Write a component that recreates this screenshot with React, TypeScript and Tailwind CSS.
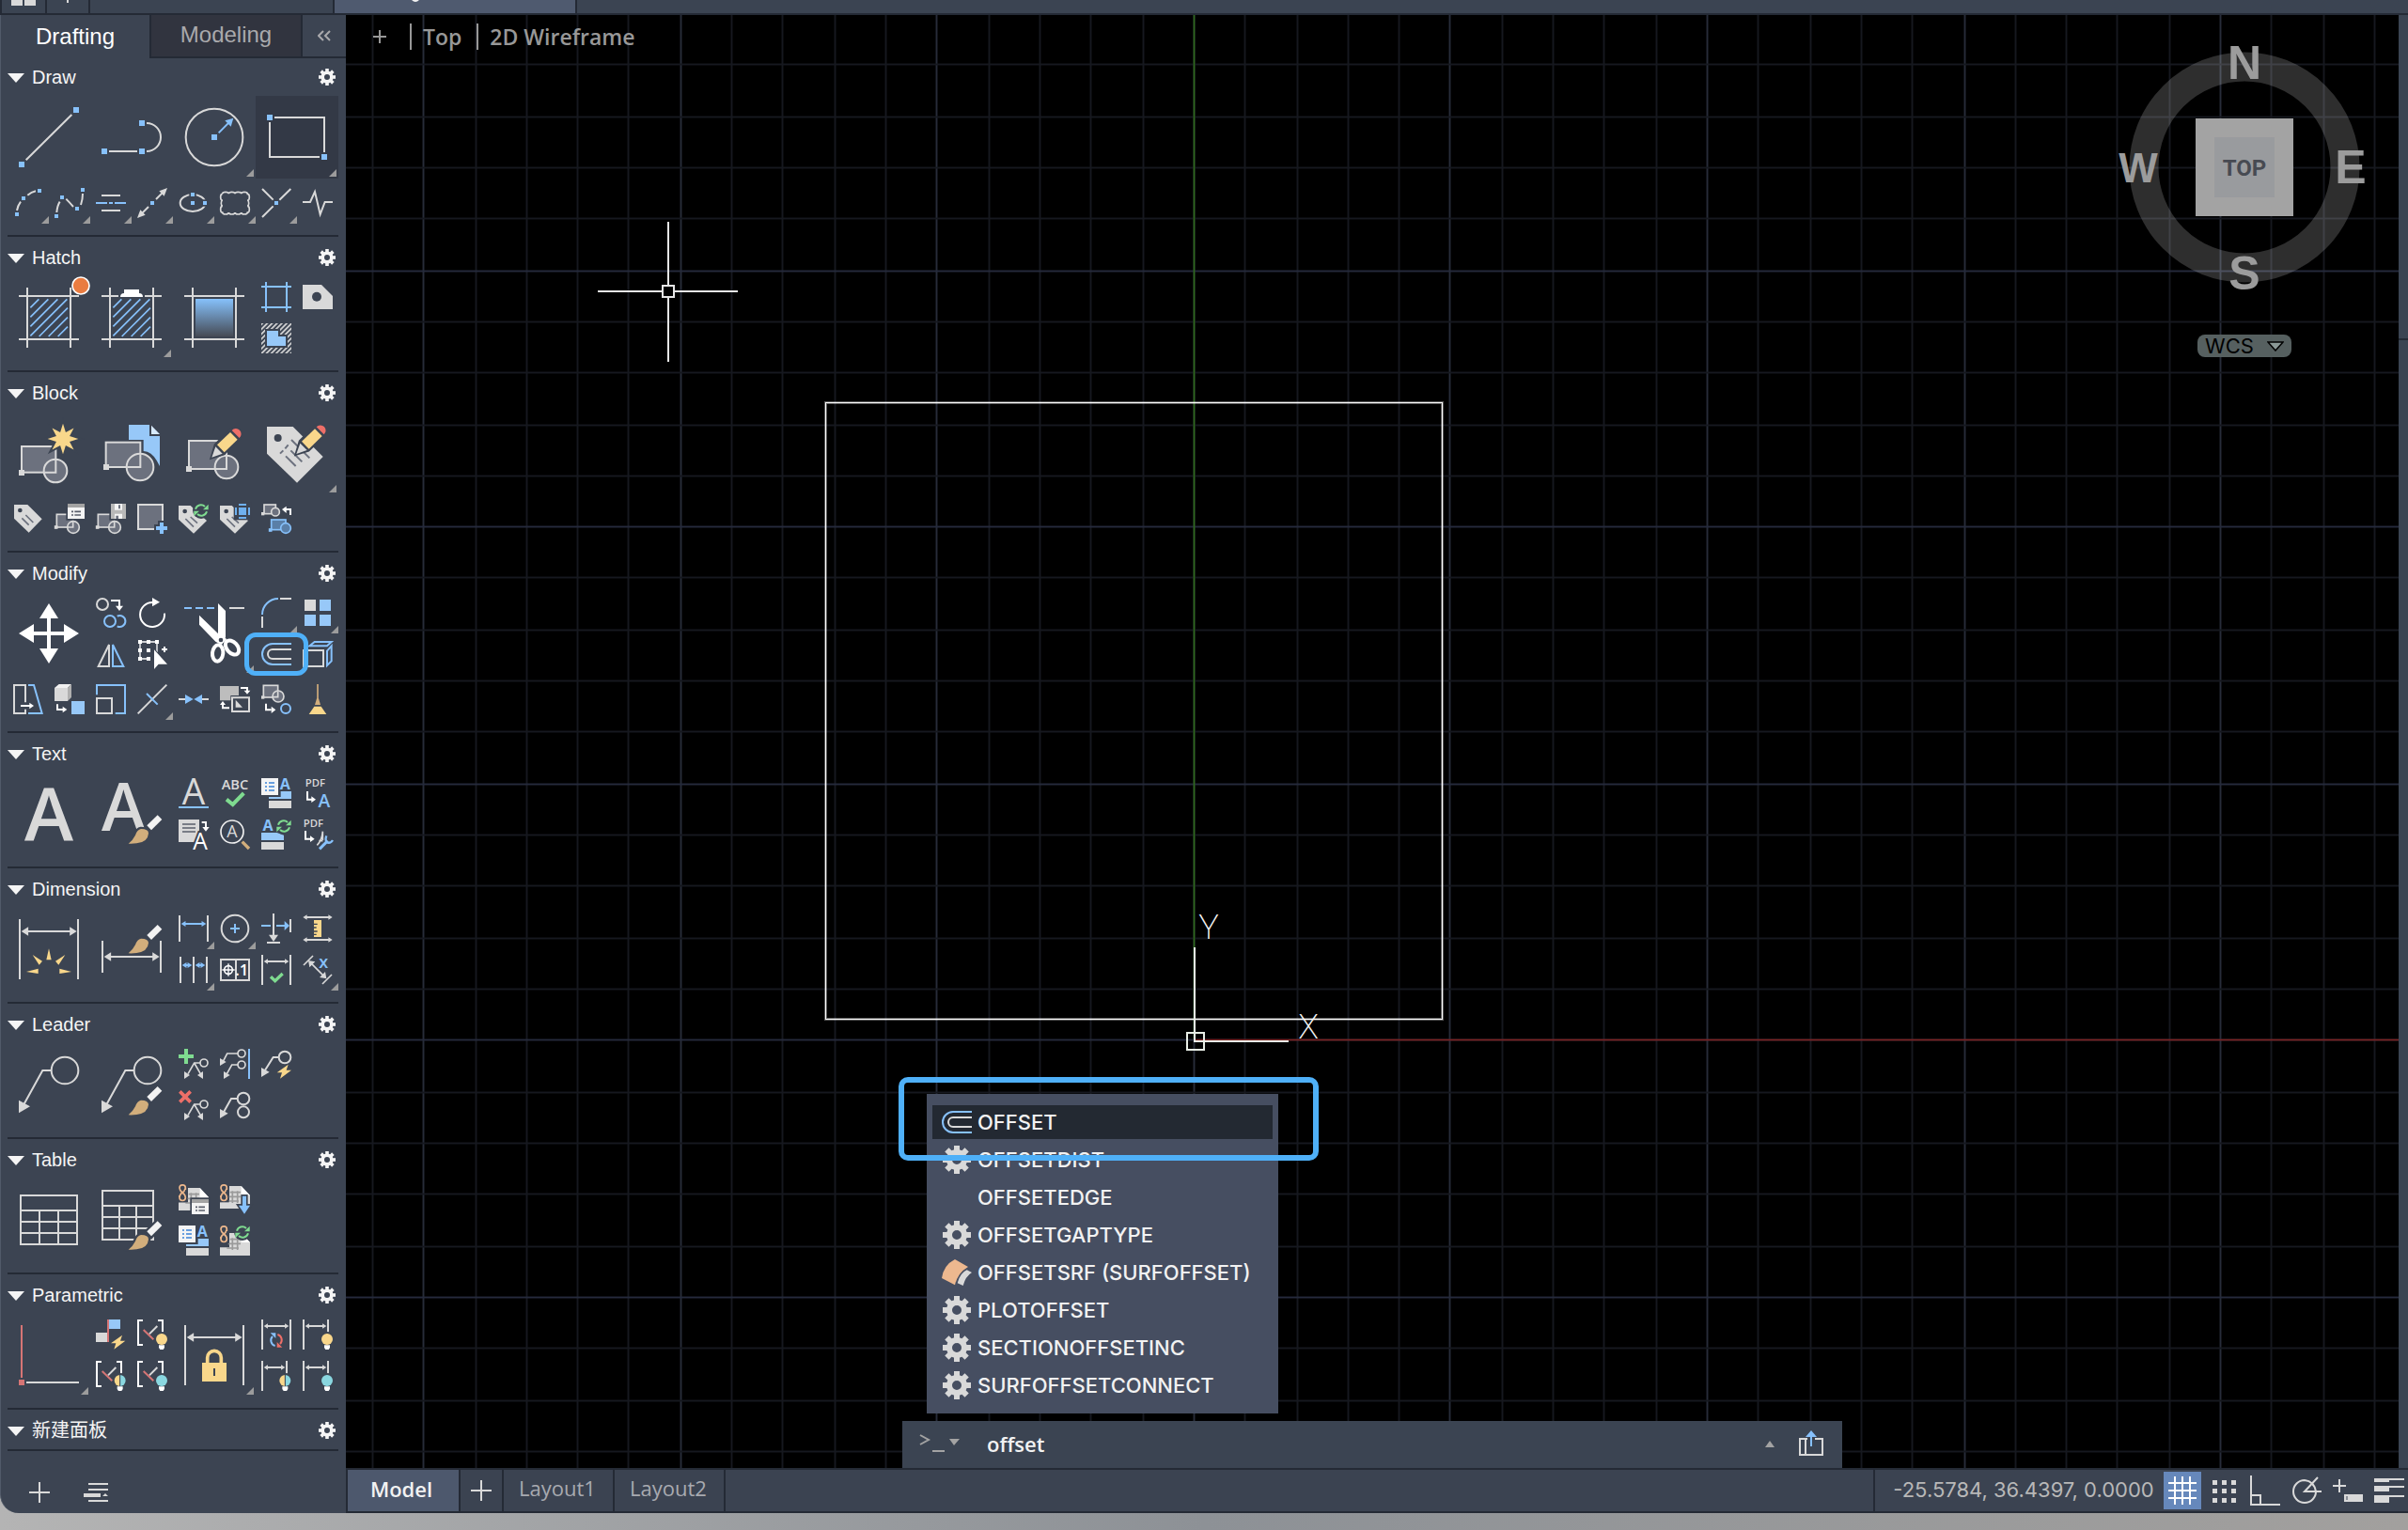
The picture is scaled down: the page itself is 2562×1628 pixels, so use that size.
import React from "react";
import { clsx } from "clsx";

const LIGHT = "#d9d9d9";
const WHITE = "#ffffff";
const BLUE = "#87c1fb";
const SKY = "#97c8f8";
const GRAY = "#6c717e";
const PANEL = "#3c4452";
const YELLOW = "#f9d78b";
const RED = "#ee6f68";
const BRICK = "#d67575";
const GREEN = "#7fdb90";
const TAN = "#d2ae7c";
const PEACH = "#ecb78c";
const CYAN = "#8ad7e0";

/* ---------- drawing primitives ---------- */

const Line = ({ d, c = LIGHT, w = 6 }: { d: string; c?: string; w?: number }) => (
  <path d={d} fill="none" stroke={c} strokeWidth={w} />
);

const Fill = ({ d, c = LIGHT }: { d: string; c?: string }) => <path d={d} fill={c} />;

const Dot = ({ x, y, s = 18, c = BLUE }: { x: number; y: number; s?: number; c?: string }) => (
  <rect x={x - s / 2} y={y - s / 2} width={s} height={s} fill={c} />
);

const Ring = ({ x, y, r, c = LIGHT, f = "none", w = 6 }: { x: number; y: number; r: number; c?: string; f?: string; w?: number }) => (
  <circle cx={x} cy={y} r={r} fill={f} stroke={c} strokeWidth={w} />
);

interface LetterProps {
  x: number;
  y: number;
  size: number;
  c?: string;
  weight?: number;
  halo?: boolean;
  children: string;
}

function Letter({ x, y, size, c = LIGHT, weight = 600, halo, children }: LetterProps) {
  return (
    <text
      x={x}
      y={y}
      fontSize={size}
      fontWeight={weight}
      fill={c}
      stroke={halo ? PANEL : "none"}
      strokeWidth={halo ? 12 : 0}
      paintOrder="stroke"
      textAnchor="middle"
      fontFamily="'Open Sans', 'Noto Sans', sans-serif"
    >
      {children}
    </text>
  );
}

// Horizontal dimension arrow, heads on both ends
function Arrows({ a, b, y, c = LIGHT, h = 8 }: { a: number; b: number; y: number; c?: string; h?: number }) {
  return (
    <>
      <Line d={`M${a + h} ${y}H${b - h}`} c={c} />
      <Fill d={`M${a} ${y}l${h * 1.6} ${-h}v${h * 2}zM${b} ${y}l${-h * 1.6} ${-h}v${h * 2}z`} c={c} />
    </>
  );
}

function Gear({ className }: { className?: string }) {
  return (
    <svg viewBox="0 0 30 30" className={className} fill="currentColor">
      {[0, 45, 90, 135, 180, 225, 270, 315].map((a) => (
        <rect key={a} x="12" y="0" width="6" height="6" transform={`rotate(${a} 15 15)`} />
      ))}
      <circle cx="15" cy="15" r="8" fill="none" stroke="currentColor" strokeWidth="6" />
    </svg>
  );
}

const Brush = ({ dy = 0 }: { dy?: number }) => (
  <g transform={`translate(0 ${dy})`}>
    <path
      d="M179 100L193 114L159 148L145 133ZM126 144Q150 144 150 158Q148 186 112 190Q98 192 86 190Q100 180 108 164Q114 146 126 144Z"
      fill={PANEL}
      stroke={PANEL}
      strokeWidth="14"
    />
    <Fill d="M179 100L193 114L159 148L145 133Z" c="#f3f3f3" />
    <Fill d="M126 144Q150 144 150 158Q148 186 112 190Q98 192 86 191Q100 180 108 164Q114 146 126 144Z" c={TAN} />
  </g>
);

const Pencil = ({ dx = 0, dy = 0 }: { dx?: number; dy?: number }) => (
  <g transform={`translate(${dx} ${dy})`}>
    <path d="M88 110L100 70L148 22A17 17 0 0 1 176 50L126 98Z" fill={PANEL} stroke={PANEL} strokeWidth="10" />
    <Fill d="M88 110L100 76L122 98Z" />
    <Fill d="M105 70L147 30L170 53L128 94Z" c={YELLOW} />
    <path d="M152 24A17 17 0 1 1 176 48Z" fill={RED} />
  </g>
);

const Sync = ({ x, y, r = 18, a = GREEN, b = GREEN }: { x: number; y: number; r?: number; a?: string; b?: string }) => (
  <g transform={`translate(${x} ${y})`}>
    <circle r={r + 9} fill={PANEL} />
    <Line d={`M${-r} -4A${r} ${r} 0 0 1 ${r - 6} ${-r + 6}`} c={a} />
    <Line d={`M${r} 4A${r} ${r} 0 0 1 ${-r + 6} ${r - 6}`} c={b} />
    <Fill d={`M${r + 5} ${-r - 1}V-2H${r - 12}Z`} c={a} />
    <Fill d={`M${-r - 5} ${r + 1}V2H${-r + 12}Z`} c={b} />
  </g>
);

const Bolt = ({ dx = 0 }: { dx?: number }) => (
  <g transform={`translate(${dx} 0)`}>
    <path d="M86 50L50 76H66L60 95L96 68H80Z" fill={YELLOW} />
  </g>
);

const Bulb = ({ x, y, left, right }: { x: number; y: number; left: string; right: string }) => (
  <g>
    <circle cx={x} cy={y} r="23" fill={PANEL} />
    <path d={`M${x} ${y - 18}A18 18 0 0 0 ${x} ${y + 18}Z`} fill={left} />
    <path d={`M${x} ${y - 18}A18 18 0 0 1 ${x} ${y + 18}Z`} fill={right} />
    {left === right ? (
      <path d={`M${x} ${y - 17}v34`} stroke={left} strokeWidth="2" />
    ) : (
      <path d={`M${x} ${y - 18}v36`} stroke={PANEL} strokeWidth="3" />
    )}
    <path d={`M${x - 9} ${y + 19}h18v8l-4 6h-10l-4 -6z`} fill={WHITE} />
  </g>
);

const ListCard = () => (
  <>
    <rect width="54" height="54" fill="#f4f4f4" />
    <path d="M12 15h6M24 15h18M12 27h6M24 27h18M12 39h6M24 39h18" stroke="#3b82d6" strokeWidth="5" />
  </>
);

const WindowCard = ({ x, y }: { x: number; y: number }) => (
  <g transform={`translate(${x} ${y})`}>
    <rect x="-5" y="-5" width="64" height="58" fill={PANEL} />
    <rect width="54" height="48" fill="#f4f4f4" />
    <rect width="54" height="12" fill="#a3a3a3" />
    <path d="M12 25h6M22 25h20M12 36h6M22 36h20" stroke="#5a5f6b" strokeWidth="5" />
  </g>
);

const SmallTag = () => (
  <>
    <Fill d="M0 6H38L90 54L48 95L0 50Z" />
    <circle cx="20" cy="24" r="7" fill={PANEL} />
    <Line d="M22 48L48 74M38 42L60 62" c={GRAY} w={5} />
  </>
);

const SmallBlock = () => (
  <>
    <rect x="7" y="34" width="52" height="41" fill={GRAY} stroke={LIGHT} strokeWidth="5" />
    <Dot x={5} y={75} s={11} c={LIGHT} />
    <Ring x={60} y={75} r={19} f={GRAY} w={5} />
    <Line d="M59 58V75H42" w={5} />
  </>
);

const Link = () => (
  <>
    <rect x="-3" y="-2" width="32" height="60" fill={PANEL} />
    <path d="M22 18V12A9 9 0 0 0 3 12Q3 20 12 27Q22 34 22 43A9 9 0 0 1 3 43V36" fill="none" stroke={PEACH} strokeWidth="5" />
    <path d="M12 27Q20 22 21 14M12 27Q4 32 3 42" fill="none" stroke={PEACH} strokeWidth="5" />
  </>
);

const Sheet = () => (
  <>
    <path d="M30 12H68L96 42V84H0V58H30Z" fill={LIGHT} />
    <path d="M68 12L96 42H68Z" fill={WHITE} />
    <path d="M32 32H66M26 46H66M22 60H60M40 28V66M56 28V66" fill="none" stroke="#9a9a9a" strokeWidth="5" />
  </>
);

const MiniLeader = () => (
  <>
    <Ring x={81} y={45} r={12} w={5} />
    <Line d="M69 45H50L30 80M50 45L70 80" w={5} />
    <Fill d="M18 96V72L36 84ZM78 96V72L60 84Z" />
  </>
);

const Bracket = () => (
  <>
    <Line d="M18 3H3V81H18M66 3H81V40" c={WHITE} />
    <Line d="M20 33L52 64" c={BRICK} />
    <Line d="M39 46L64 21" />
  </>
);

const DimShort = () => (
  <>
    <Line d="M3 0V96M81 0V40" />
    <Arrows a={8} b={76} y={21} />
  </>
);

const HatchFrame = ({ gap }: { gap?: boolean }) => (
  <Line d={`M27 0V192M165 0V192M0 165H192${gap ? "M0 27H54M138 27H192" : "M0 27H192"}`} />
);

const HatchLines = () => (
  <>
    {[101, 131, 161, 191, 221, 251, 281].map((c) => {
      const x1 = Math.max(37, c - 156);
      const x2 = Math.min(156, c - 37);
      return <path key={c} d={`M${x1} ${c - x1}L${x2} ${c - x2}`} stroke={BLUE} strokeWidth="5" />;
    })}
  </>
);

const starPath = (cx: number, cy: number, outer: number, inner: number) =>
  Array.from({ length: 16 }, (_, i) => {
    const r = i % 2 ? inner : outer;
    const a = (i * Math.PI) / 8 - Math.PI / 2;
    return `${i ? "L" : "M"}${(cx + r * Math.cos(a)).toFixed(1)} ${(cy + r * Math.sin(a)).toFixed(1)}`;
  }).join("") + "Z";

const OffsetShape = () => (
  <>
    <Line d="M96 15H36A33 33 0 0 0 36 81H96" c={BLUE} />
    <Line d="M96 33H36A15 15 0 0 0 36 63H96" />
  </>
);

const StyleManager = () => (
  <>
    <Fill d="M24 72H96V96H24Z" />
    <Fill d="M62 42H96V66H24V60H62Z" c={SKY} />
    <ListCard />
    <Letter x={76} y={35} size={48} c={BLUE} weight={700}>A</Letter>
  </>
);

/* ---------- tool buttons ---------- */

interface Tool {
  label: string;
  icon: React.ReactNode;
  flyout?: boolean;
  active?: boolean;
  marked?: boolean;
}

const Corner = ({ className }: { className: string }) => (
  <svg viewBox="0 0 8 8" className={clsx("absolute size-2", className)}>
    <path d="M8 0V8H0Z" fill="#9c9c9c" />
  </svg>
);

function BigTool({ label, icon, flyout, active }: Tool) {
  return (
    <button type="button" aria-label={label} className={clsx("relative flex size-22 items-center justify-center", active && "bg-[#333946]")}>
      <svg viewBox="0 0 192 192" className="size-16 overflow-visible">{icon}</svg>
      {flyout && <Corner className="right-0.5 bottom-0.5" />}
    </button>
  );
}

function SmallTool({ label, icon, flyout, marked }: Tool) {
  return (
    <button type="button" aria-label={label} className="relative flex size-11 items-center justify-center">
      <svg viewBox="0 0 96 96" className="size-8 overflow-visible">{icon}</svg>
      {flyout && <Corner className="right-0 bottom-0" />}
      {marked && <span className="absolute -inset-x-3 -inset-y-px z-10 rounded-xl border-[5px] border-[#4fb0f8]" />}
    </button>
  );
}

const Quad = ({ tools }: { tools: Tool[] }) => (
  <div className="grid size-22 grid-cols-2 content-start">
    {tools.map((t) => (
      <SmallTool key={t.label} {...t} />
    ))}
  </div>
);

function Section({ title, children }: { title: string; children?: React.ReactNode }) {
  return (
    <section className="border-b-2 border-[#242a35]">
      <header className="flex h-[42px] items-center justify-between pt-0.5 pr-[3px]">
        <button type="button" className="flex items-center gap-2 text-xl leading-6 text-[#f5f5f5]">
          <svg viewBox="0 0 18 10" className="mt-0.5 h-[10px] w-[18px]" fill="#f5f5f5">
            <path d="M0 0H18L9 10Z" />
          </svg>
          {title}
        </button>
        <button type="button" aria-label={`${title} settings`}>
          <Gear className="size-[18px] text-[#f5f5f5]" />
        </button>
      </header>
      {children && <div className="flex flex-col gap-1 pb-3">{children}</div>}
    </section>
  );
}

const Row = ({ children }: { children: React.ReactNode }) => <div className="flex">{children}</div>;

/* ---------- icon sets ---------- */

const drawBig: Tool[] = [
  {
    label: "Line",
    icon: (
      <>
        <Line d="M23 169L169 24" />
        <Dot x={183} y={9} />
        <Dot x={9} y={183} />
      </>
    ),
  },
  {
    label: "Polyline",
    icon: (
      <>
        <Line d="M24 141H114M144 51A45 45 0 0 1 144 141" />
        <Dot x={129} y={51} />
        <Dot x={9} y={141} />
        <Dot x={129} y={141} />
      </>
    ),
  },
  {
    label: "Circle",
    flyout: true,
    icon: (
      <>
        <Ring x={96} y={96} r={91} />
        <Dot x={96} y={96} />
        <Line d="M110 82L142 50" c={BLUE} />
        <Fill d="M157 35L130 43L149 62Z" c={BLUE} />
      </>
    ),
  },
  {
    label: "Rectangle",
    flyout: true,
    active: true,
    icon: (
      <>
        <Line d="M24 33H183V144M9 48V159H168" />
        <Dot x={9} y={33} />
        <Dot x={183} y={159} />
      </>
    ),
  },
];

const drawSmall: Tool[] = [
  {
    label: "Arc",
    flyout: true,
    icon: (
      <>
        <Line d="M12 72Q15 56 24 44M46 23Q58 13 72 10" />
        <Dot x={84} y={9} s={12} />
        <Dot x={33} y={33} s={12} />
        <Dot x={12} y={84} s={12} />
      </>
    ),
  },
  {
    label: "Spline",
    flyout: true,
    icon: (
      <>
        <Line d="M7 78Q9 56 17 44M37 35Q44 42 60 60M84 54Q90 36 90 18" />
        <Dot x={6} y={90} s={12} />
        <Dot x={24} y={30} s={12} />
        <Dot x={72} y={66} s={12} />
        <Dot x={90} y={6} s={12} />
      </>
    ),
  },
  {
    label: "Centerline",
    flyout: true,
    icon: (
      <>
        <Line d="M18 24H78M18 72H78" />
        <Line d="M0 48H36M42 48H54M60 48H96" c={BLUE} />
      </>
    ),
  },
  {
    label: "Ray",
    flyout: true,
    icon: (
      <>
        <Line d="M60 36L82 14M36 60L14 82" />
        <Fill d="M96 0L70 10L86 26ZM0 96L26 86L10 70Z" />
        <Dot x={48} y={48} s={12} />
      </>
    ),
  },
  {
    label: "Ellipse",
    flyout: true,
    icon: (
      <>
        <ellipse cx="45" cy="48" rx="40" ry="27" fill="none" stroke={LIGHT} strokeWidth="6" />
        <Dot x={45} y={21} s={22} c={PANEL} />
        <Dot x={84} y={48} s={22} c={PANEL} />
        <Dot x={45} y={21} s={12} />
        <Dot x={45} y={48} s={12} />
        <Dot x={84} y={48} s={12} />
      </>
    ),
  },
  {
    label: "Revision cloud",
    flyout: true,
    icon: (
      <Line
        d="M8 19a10 6 0 0 1 20 0a10 6 0 0 1 20 0a10 6 0 0 1 20 0a10 6 0 0 1 20 0a6 10 0 0 1 0 20a6 10 0 0 1 0 19a6 10 0 0 1 0 20a10 6 0 0 1 -20 0a10 6 0 0 1 -20 0a10 6 0 0 1 -20 0a10 6 0 0 1 -20 0a6 10 0 0 1 0 -20a6 10 0 0 1 0 -19a6 10 0 0 1 0 -20"
        w={5}
      />
    ),
  },
  {
    label: "Point",
    flyout: true,
    icon: (
      <>
        <Line d="M3 3L38 38M94 3L58 38M3 93L38 58" />
        <Dot x={48} y={48} s={12} />
      </>
    ),
  },
  { label: "Break line", icon: <Line d="M0 45H24L39 12L56 84L71 45H96" /> },
];

const hatchBig: Tool[] = [
  {
    label: "Hatch",
    icon: (
      <>
        <HatchFrame />
        <HatchLines />
        <circle cx="198" cy="-6" r="27" fill="#e97c41" stroke={WHITE} strokeWidth="5" />
      </>
    ),
  },
  {
    label: "Hatch edit",
    flyout: true,
    icon: (
      <>
        <HatchFrame gap />
        <HatchLines />
        <Fill d="M60 30Q60 18 72 18V6H120V18Q132 18 132 30Z" c={WHITE} />
      </>
    ),
  },
  {
    label: "Gradient",
    icon: (
      <>
        <defs>
          <linearGradient id="fade" x1="0" y1="0" x2="0" y2="1">
            <stop offset="0" stopColor="#86c1fb" />
            <stop offset="1" stopColor="#464b55" />
          </linearGradient>
        </defs>
        <HatchFrame />
        <rect x="36" y="36" width="120" height="120" fill="url(#fade)" />
      </>
    ),
  },
];

const hatchSmall: Tool[] = [
  { label: "Boundary", icon: <Line d="M15 0V96M81 0V96M0 15H96M0 81H96" c={BLUE} /> },
  {
    label: "Wipeout",
    icon: (
      <>
        <Fill d="M0 9H60L96 45V87H0Z" />
        <circle cx="45" cy="47" r="15" fill={PANEL} />
      </>
    ),
  },
  {
    label: "Region",
    icon: (
      <>
        <defs>
          <pattern id="stripes" width="11" height="11" patternUnits="userSpaceOnUse" patternTransform="rotate(45)">
            <rect width="5" height="11" fill={LIGHT} />
          </pattern>
        </defs>
        <path d="M0 0H96V96H0ZM12 18V78H84V36H60V18Z" fillRule="evenodd" fill="url(#stripes)" />
        <Fill d="M18 24H54V42H78V72H18Z" c={SKY} />
      </>
    ),
  },
];

const blockBig: Tool[] = [
  {
    label: "Create block",
    icon: (
      <>
        <rect x="9" y="75" width="109" height="83" fill={GRAY} stroke={LIGHT} strokeWidth="6" />
        <Dot x={9} y={159} c={LIGHT} />
        <Ring x={117} y={153} r={37} f={GRAY} />
        <Line d="M118 118V158H82" />
        <path d={starPath(141, 51, 49, 23)} fill={YELLOW} stroke={PANEL} strokeWidth="12" paintOrder="stroke" />
      </>
    ),
  },
  {
    label: "Insert block",
    icon: (
      <>
        <Fill d="M87 6H153V42H186V138L176 120Q160 92 134 90V54H87Z" c={SKY} />
        <Fill d="M159 8L186 36H159Z" c="#d8ebfd" />
        <rect x="14" y="62" width="110" height="79" fill={GRAY} stroke={LIGHT} strokeWidth="6" />
        <Dot x={15} y={141} c={LIGHT} />
        <Ring x={123} y={141} r={43} f={GRAY} />
        <Line d="M124 100V141H82" />
      </>
    ),
  },
  {
    label: "Edit block",
    icon: (
      <>
        <rect x="15" y="57" width="120" height="90" fill={GRAY} stroke={LIGHT} strokeWidth="6" />
        <Dot x={15} y={147} c={LIGHT} />
        <Ring x={135} y={141} r={37} f={GRAY} />
        <Line d="M135 106V147H99" />
        <Pencil />
      </>
    ),
  },
  {
    label: "Edit attributes",
    flyout: true,
    icon: (
      <>
        <Fill d="M0 12H83L179 108L96 191L0 98Z" />
        <circle cx="35" cy="48" r="12" fill={PANEL} />
        <Line d="M60 106L92 138M76 88L112 124M42 98L52 88M58 82L68 70M78 54L136 112" c={GRAY} />
        <Pencil dx={6} dy={-11} />
      </>
    ),
  },
];

const blockSmall: Tool[] = [
  {
    label: "Define attributes",
    icon: (
      <>
        <Fill d="M3 3H46L92 49L50 92L3 47Z" />
        <circle cx="22" cy="21" r="7" fill={PANEL} />
        <Line d="M28 46L50 68M40 36L64 60" c={GRAY} w={5} />
      </>
    ),
  },
  {
    label: "Block properties",
    icon: (
      <>
        <SmallBlock />
        <WindowCard x={42} y={0} />
      </>
    ),
  },
  {
    label: "Write block",
    icon: (
      <>
        <SmallBlock />
        <rect x="43" y="-5" width="58" height="58" fill={PANEL} />
        <Fill d="M48 0H96V48H48Z" c="#b9b9b9" />
        <Fill d="M60 0H84V20H60ZM60 32H84V48H60Z" c="#f4f4f4" />
        <Fill d="M72 4H78V16H72ZM64 38H72V48H64Z" c="#6c717e" />
      </>
    ),
  },
  {
    label: "Set base point",
    icon: (
      <>
        <rect x="3" y="3" width="78" height="78" fill={GRAY} stroke={LIGHT} strokeWidth="6" />
        <Line d="M78 54V102M54 78H102" c={PANEL} w={24} />
        <Line d="M78 60V96M60 78H96" c={BLUE} w={12} />
      </>
    ),
  },
  {
    label: "Synchronize attributes",
    icon: (
      <>
        <SmallTag />
        <Sync x={72} y={21} />
      </>
    ),
  },
  {
    label: "Manage attributes",
    icon: (
      <>
        <SmallTag />
        <Fill d="M44 -4H100V52H44Z" c={PANEL} />
        <Fill d="M60 12H84V36H60ZM60 0H84V6H60ZM60 42H84V48H60ZM48 12H54V36H48ZM90 12H96V36H90Z" c="#6fb0ee" />
      </>
    ),
  },
  {
    label: "Replace block",
    icon: (
      <>
        <rect x="9" y="3" width="37" height="29" fill={GRAY} stroke={LIGHT} strokeWidth="5" />
        <Dot x={5} y={32} s={10} c={LIGHT} />
        <Ring x={45} y={26} r={13} f={GRAY} w={5} />
        <Line d="M93 36V18H76" c={WHITE} />
        <Fill d="M66 18L80 8V30Z" c={WHITE} />
        <rect x="32" y="51" width="46" height="32" fill="#5a7fa8" stroke={BLUE} strokeWidth="5" />
        <Dot x={29} y={84} s={11} />
        <Ring x={78} y={78} r={16} c={BLUE} f="#5a7fa8" w={5} />
      </>
    ),
  },
];

const moveTool: Tool = {
  label: "Move",
  icon: (
    <>
      <Line d="M96 30V162M30 96H162" c={WHITE} w={12} />
      <Fill d="M96 0L126 48H66ZM96 192L66 144H126ZM0 96L48 66V126ZM192 96L144 126V66Z" c={WHITE} />
    </>
  ),
};

const trimTool: Tool = {
  label: "Trim",
  flyout: true,
  icon: (
    <>
      <Line d="M0 15H24M36 15H60M72 15H96" c={BLUE} />
      <Line d="M144 15H192" />
      <Fill d="M108 0L132 24V108L120 132L108 118Z" c={WHITE} />
      <Fill d="M48 38L114 102L136 114L118 132L100 122L48 68Z" c={WHITE} />
      <ellipse cx="107" cy="159" rx="17" ry="26" fill="none" stroke={WHITE} strokeWidth="12" transform="rotate(6 107 159)" />
      <ellipse cx="153" cy="141" rx="17" ry="26" fill="none" stroke={WHITE} strokeWidth="12" transform="rotate(-42 153 141)" />
      <circle cx="117" cy="117" r="7" fill={PANEL} />
    </>
  ),
};

const modifyA: Tool[] = [
  {
    label: "Copy",
    icon: (
      <>
        <Ring x={21} y={21} r={18} />
        <Line d="M48 9H75V28" c={WHITE} />
        <Fill d="M63 26H87L75 42Z" c={WHITE} />
        <Ring x={45} y={75} r={18} c={BLUE} />
        <Line d="M68 59A18 18 0 1 1 68 91" c={BLUE} />
      </>
    ),
  },
  {
    label: "Rotate",
    icon: (
      <>
        <Line d="M87 50A39 39 0 1 1 50 15" c={WHITE} />
        <Fill d="M48 0L72 14L48 28Z" c={WHITE} />
      </>
    ),
  },
  {
    label: "Mirror",
    icon: (
      <>
        <Line d="M42 18V87H8Z" />
        <Line d="M54 18V87H88Z" c={BLUE} />
      </>
    ),
  },
  {
    label: "Select similar",
    icon: (
      <>
        <Line d="M9 9H63V63M9 9V63H40" c={WHITE} w={4} />
        {[[9, 9], [36, 9], [63, 9], [9, 36], [36, 36], [9, 63], [36, 63]].map(([x, y]) => (
          <Dot key={`${x}-${y}`} x={x} y={y} s={12} c={WHITE} />
        ))}
        <path d="M54 34V96L68 80H96Z" fill={WHITE} stroke={PANEL} strokeWidth="6" paintOrder="stroke" />
        <Line d="M87 24V42M78 33H96" c={WHITE} />
      </>
    ),
  },
];

const modifyB: Tool[] = [
  {
    label: "Fillet",
    flyout: true,
    icon: (
      <>
        <Line d="M3 54A51 51 0 0 1 54 3" c={BLUE} />
        <Line d="M60 3H96M3 60V96" />
      </>
    ),
  },
  {
    label: "Array",
    flyout: true,
    icon: (
      <>
        <Fill d="M6 6H42V42H6Z" />
        <Fill d="M54 6H90V42H54ZM6 54H42V90H6ZM54 54H90V90H54Z" c={SKY} />
      </>
    ),
  },
  { label: "Offset", marked: true, icon: <OffsetShape /> },
  {
    label: "Extrude faces",
    icon: (
      <>
        <Line d="M3 36H66V87H3Z" />
        <Line d="M22 22L38 9H92L78 22ZM78 38L92 22V70L78 84Z" c={BLUE} />
      </>
    ),
  },
];

const modifySmall: Tool[] = [
  {
    label: "Stretch",
    icon: (
      <>
        <Line d="M39 58V3H3V93H39V80" />
        <Line d="M48 3H66L92 93H48" c={BLUE} />
        <Line d="M24 69H54" c={WHITE} />
        <Fill d="M66 69L52 59V79Z" c={WHITE} />
      </>
    ),
  },
  {
    label: "Align",
    icon: (
      <>
        <Fill d="M0 12H42V54H0Z" />
        <Fill d="M0 12L14 0H54L42 12Z" c="#f0f0f0" />
        <Fill d="M42 12L54 0V42L42 54Z" c="#b0b0b0" />
        <Line d="M9 64V81H28" c={WHITE} />
        <Fill d="M40 81L26 71V91Z" c={WHITE} />
        <Fill d="M54 54H96V96H54Z" c={SKY} />
      </>
    ),
  },
  {
    label: "Scale",
    icon: (
      <>
        <Line d="M3 45H51V93H3Z" />
        <Line d="M3 34V3H93V93H62" c={BLUE} />
      </>
    ),
  },
  {
    label: "Break",
    flyout: true,
    icon: (
      <>
        <Line d="M94 2L2 94" />
        <Line d="M30 30L65 65" c={BLUE} />
      </>
    ),
  },
  {
    label: "Join",
    icon: (
      <>
        <Line d="M0 48H22M74 48H96" />
        <Fill d="M21 33L47 48L21 63ZM75 33L49 48L75 63Z" c={BLUE} />
      </>
    ),
  },
  {
    label: "Draw order",
    icon: (
      <>
        <Fill d="M0 6H60V36H34V52H0Z" c="#bdbdbd" />
        <Line d="M39 43H93V87H39Z" />
        <Fill d="M50 50L72 74H50Z" />
        <Line d="M66 12H87V22M9 64V76H30" c={WHITE} />
        <Fill d="M77 20H97L87 32ZM0 66H18L9 54Z" c={WHITE} />
      </>
    ),
  },
  {
    label: "Copy nested objects",
    icon: (
      <>
        <rect x="7" y="4" width="46" height="38" fill={GRAY} stroke={LIGHT} strokeWidth="5" />
        <Dot x={5} y={42} s={10} c={LIGHT} />
        <Ring x={54} y={39} r={18} f={GRAY} w={5} />
        <Line d="M53 24V41H38" w={5} />
        <Line d="M15 62V82H32" c={WHITE} />
        <Fill d="M46 82L32 71V93Z" c={WHITE} />
        <Ring x={78} y={78} r={15} c={BLUE} />
      </>
    ),
  },
  {
    label: "Purge",
    icon: (
      <>
        <Line d="M48 0V52" c={TAN} w={5} />
        <Fill d="M45 46H51L57 66H39Z" c={TAN} />
        <Fill d="M37 71H59L76 96H20Z" c={YELLOW} />
      </>
    ),
  },
];

const textBig: Tool[] = [
  { label: "Multiline text", icon: <Letter x={96} y={180} size={236} weight={600}>A</Letter> },
  {
    label: "Text style",
    icon: (
      <>
        <Letter x={70} y={150} size={212} weight={600}>A</Letter>
        <Brush />
      </>
    ),
  },
];

const textA: Tool[] = [
  {
    label: "Single line text",
    icon: (
      <>
        <Letter x={48} y={83} size={116} weight={400}>A</Letter>
        <Line d="M0 93H96" c={BLUE} />
      </>
    ),
  },
  {
    label: "Check spelling",
    icon: (
      <>
        <Letter x={48} y={36} size={44}>ABC</Letter>
        <Line d="M21 68L41 84L76 48" c={GREEN} w={12} />
      </>
    ),
  },
  {
    label: "Convert to mtext",
    icon: (
      <>
        <Fill d="M0 0H66V40L50 72H0Z" />
        <Line d="M12 15H54M12 27H54M12 39H54" c="#5a5f6b" w={4} />
        <Line d="M74 9H87V24" c={WHITE} />
        <Fill d="M76 24H98L87 38Z" c={WHITE} />
        <Letter x={69} y={96} size={74} c={WHITE} weight={500} halo>A</Letter>
      </>
    ),
  },
  {
    label: "Find text",
    icon: (
      <>
        <Ring x={39} y={39} r={36} w={5} c="#f0f0f0" />
        <Letter x={39} y={57} size={54} weight={400}>A</Letter>
        <Line d="M71 71L93 93" c={TAN} w={10} />
      </>
    ),
  },
];

const textB: Tool[] = [
  { label: "Text style manager", icon: <StyleManager /> },
  {
    label: "PDF text import",
    icon: (
      <>
        <Letter x={40} y={28} size={34}>PDF</Letter>
        <Line d="M15 42V68H30" c={WHITE} />
        <Fill d="M42 68L28 58V78Z" c={WHITE} />
        <Letter x={69} y={92} size={58} c={BLUE}>A</Letter>
      </>
    ),
  },
  {
    label: "Update text",
    icon: (
      <>
        <Fill d="M0 72H72V96H0Z" />
        <Fill d="M0 42H50L72 50V66H0Z" c={SKY} />
        <Letter x={21} y={35} size={48} c={BLUE} weight={700}>A</Letter>
        <Sync x={72} y={21} />
      </>
    ),
  },
  {
    label: "PDF text settings",
    icon: (
      <>
        <Letter x={34} y={24} size={34}>PDF</Letter>
        <Line d="M9 36V62H24" c={WHITE} />
        <Fill d="M38 62L24 52V72Z" c={WHITE} />
        <Line d="M46 82Q62 66 64 38V66M52 68H64" w={5} />
        <Line d="M54 94L80 68" c={BLUE} w={9} />
        <Line d="M76 52Q70 68 80 74Q90 76 96 66" c={BLUE} w={7} />
      </>
    ),
  },
];

const dimBig: Tool[] = [
  {
    label: "Dimension",
    icon: (
      <>
        <Line d="M3 0V192M189 0V192" />
        <Arrows a={8} b={185} y={39} h={14} />
        <Fill
          d="M96 94L104 130H88ZM44 114L75 134L65 146ZM148 114L117 134L127 146ZM24 168L62 158V174ZM168 168L130 158V174Z"
          c={YELLOW}
        />
      </>
    ),
  },
  {
    label: "Dimension style",
    icon: (
      <>
        <Line d="M3 69V171M189 69V171" />
        <Arrows a={8} b={185} y={120} h={14} />
        <Brush dy={-82} />
      </>
    ),
  },
];

const dimA: Tool[] = [
  {
    label: "Linear",
    flyout: true,
    icon: (
      <>
        <Line d="M3 6V90M93 6V90" />
        <Arrows a={8} b={88} y={33} c={BLUE} h={9} />
      </>
    ),
  },
  {
    label: "Center mark",
    flyout: true,
    icon: (
      <>
        <Ring x={48} y={48} r={43} />
        <Line d="M48 33V63M33 48H63" c={BLUE} />
      </>
    ),
  },
  {
    label: "Continue",
    flyout: true,
    icon: (
      <>
        <Line d="M6 6V90M48 6V90M90 6V90" />
        <Arrows a={11} b={43} y={33} c={BLUE} h={9} />
        <Arrows a={53} b={85} y={33} c={BLUE} h={9} />
      </>
    ),
  },
  {
    label: "Tolerance",
    icon: (
      <>
        <Line d="M3 15H93V81H3ZM51 15V81" />
        <Ring x={27} y={48} r={13} c={WHITE} w={5} />
        <Line d="M27 28V68M7 48H47" c={WHITE} w={4} />
        <Letter x={70} y={66} size={50} c={WHITE}>.1</Letter>
      </>
    ),
  },
];

const dimB: Tool[] = [
  {
    label: "Ordinate",
    icon: (
      <>
        <Line d="M39 0V72M18 93H60M93 18V60" />
        <Fill d="M24 68H54L39 90Z" />
        <Line d="M0 39H30M48 39H80" c={BLUE} />
        <Fill d="M90 39L74 24V54Z" c={BLUE} />
      </>
    ),
  },
  {
    label: "Dimension space",
    icon: (
      <>
        <Arrows a={1} b={95} y={12} h={8} />
        <Arrows a={1} b={95} y={84} h={8} />
        <Fill d="M36 21H60V75H36Z" c={YELLOW} />
        <Line d="M36 34H47M36 45H44M36 57H47M36 67H44" c={PANEL} w={4} />
      </>
    ),
  },
  {
    label: "Inspect",
    icon: (
      <>
        <Line d="M3 0V96M93 0V96" />
        <Arrows a={8} b={88} y={21} />
        <Line d="M30 70L44 83L68 60" c={GREEN} w={10} />
      </>
    ),
  },
  {
    label: "Oblique",
    flyout: true,
    icon: (
      <>
        <Line d="M3 33L33 3M63 93L93 63M26 26L70 70" w={5} />
        <Fill d="M18 18L40 22L22 40ZM76 76L72 54L54 72Z" />
        <Letter x={67} y={42} size={54} c={BLUE}>x</Letter>
      </>
    ),
  },
];

const BigLeader = () => (
  <>
    <Ring x={147} y={51} r={43} />
    <Line d="M104 51H76L16 160" />
    <Fill d="M0 146L36 166L0 187Z" />
  </>
);

const leaderBig: Tool[] = [
  { label: "Multileader", icon: <BigLeader /> },
  {
    label: "Multileader style",
    icon: (
      <>
        <BigLeader />
        <Brush dy={2} />
      </>
    ),
  },
];

const leaderA: Tool[] = [
  {
    label: "Add leader",
    icon: (
      <>
        <MiniLeader />
        <Line d="M24 0V48M0 24H48" c={GREEN} w={12} />
      </>
    ),
  },
  {
    label: "Align leaders",
    icon: (
      <>
        <Line d="M93 0V96" c={BLUE} />
        <Ring x={69} y={15} r={12} w={5} />
        <Ring x={69} y={51} r={12} w={5} />
        <Line d="M57 15H23L10 40M57 51H38L22 80" w={5} />
        <Fill d="M0 54V30L20 42ZM12 96V72L32 84Z" />
      </>
    ),
  },
  {
    label: "Remove leader",
    icon: (
      <>
        <MiniLeader />
        <Line d="M4 4L38 38M38 4L4 38" c={RED} w={11} />
      </>
    ),
  },
  {
    label: "Collect leaders",
    icon: (
      <>
        <Ring x={75} y={27} r={19} />
        <Ring x={75} y={70} r={18} />
        <Line d="M56 27H36L12 70" />
        <Fill d="M0 90V60L26 74Z" />
      </>
    ),
  },
];

const leaderB: Tool[] = [
  {
    label: "Quick leader",
    icon: (
      <>
        <Ring x={75} y={27} r={19} />
        <Line d="M56 27H38L12 68" />
        <Fill d="M0 90V60L26 74Z" />
        <Bolt />
      </>
    ),
  },
];

const tableBig: Tool[] = [
  {
    label: "Table",
    icon: <Line d="M6 18H186V174H6ZM6 66H186M6 102H186M6 138H186M66 66V174M126 66V174" />,
  },
  {
    label: "Table style",
    icon: (
      <>
        <Line d="M3 3H165V159H3ZM3 51H165M3 87H165M3 123H165M57 51V159M111 51V159" />
        <Brush />
      </>
    ),
  },
];

const tableA: Tool[] = [
  {
    label: "Data link manager",
    icon: (
      <>
        <Sheet />
        <Link />
        <WindowCard x={42} y={48} />
      </>
    ),
  },
  {
    label: "Download from source",
    icon: (
      <>
        <g transform="translate(0 -6)">
          <Sheet />
        </g>
        <Link />
        <path d="M72 38H84V68H96L78 95L60 68H72Z" fill={BLUE} stroke={PANEL} strokeWidth="10" paintOrder="stroke" />
      </>
    ),
  },
  { label: "Table style manager", icon: <StyleManager /> },
  {
    label: "Upload to source",
    icon: (
      <>
        <g transform="translate(0 12)">
          <Sheet />
        </g>
        <Link />
        <Sync x={72} y={21} />
      </>
    ),
  },
];

const coincidentTool: Tool = {
  label: "Coincident",
  flyout: true,
  icon: (
    <>
      <Line d="M9 0V168" c={BRICK} />
      <Dot x={9} y={183} c={BRICK} />
      <Line d="M24 183H192" />
    </>
  ),
};

const lockTool: Tool = {
  label: "Dimensional constraint",
  flyout: true,
  icon: (
    <>
      <Line d="M3 0V192M189 0V192" />
      <Arrows a={8} b={185} y={39} h={14} />
      <Line d="M74 122V104A22 22 0 0 1 118 104V122" c={YELLOW} w={11} />
      <Fill d="M57 120H135V180H57Z" c={YELLOW} />
      <Line d="M96 138V162" c={PANEL} />
    </>
  ),
};

const paramA: Tool[] = [
  {
    label: "Auto constrain",
    icon: (
      <>
        <Fill d="M42 0H78V30H42Z" c={SKY} />
        <Fill d="M0 42H36V72H0Z" />
        <Line d="M39 0V72" c={BRICK} />
        <Bolt dx={-2} />
      </>
    ),
  },
  { label: "Show geometric constraints", icon: (<><Bracket /><Bulb x={78} y={63} left={YELLOW} right={YELLOW} /></>) },
  { label: "Toggle geometric constraints", icon: (<><Bracket /><Bulb x={77} y={63} left={YELLOW} right={CYAN} /></>) },
  { label: "Hide geometric constraints", icon: (<><Bracket /><Bulb x={78} y={63} left={CYAN} right={CYAN} /></>) },
];

const paramB: Tool[] = [
  {
    label: "Convert dimension",
    icon: (
      <>
        <Line d="M3 0V96M93 0V96" />
        <Arrows a={8} b={88} y={21} />
        <g transform="rotate(-90 48 66)">
          <Sync x={48} y={66} a={BLUE} b={RED} />
        </g>
      </>
    ),
  },
  { label: "Show dimensional constraints", icon: (<><DimShort /><Bulb x={78} y={63} left={YELLOW} right={YELLOW} /></>) },
  { label: "Toggle dimensional constraints", icon: (<><DimShort /><Bulb x={76} y={63} left={YELLOW} right={CYAN} /></>) },
  { label: "Hide dimensional constraints", icon: (<><DimShort /><Bulb x={78} y={63} left={CYAN} right={CYAN} /></>) },
];

/* ---------- tool palette ---------- */

function Palette() {
  return (
    <aside className="flex w-[368px] shrink-0 flex-col rounded-bl-[20px] border-l border-[#515a69] bg-[#3c4452]">
      <nav className="flex h-[46px] shrink-0 text-2xl leading-7">
        <button type="button" className="w-[158px] text-white">Drafting</button>
        <button type="button" className="w-[163px] border-x-2 border-b-2 border-[#242a35] bg-[#31343f] pb-0.5 text-[#a9a9ac]">Modeling</button>
        <button type="button" aria-label="Collapse palette" className="flex flex-1 items-center justify-center border-b-2 border-[#242a35]">
          <svg viewBox="0 0 14 12" className="h-3 w-3.5" fill="none" stroke="#a9a9ac" strokeWidth="2">
            <path d="M6 1L1 6L6 11M13 1L8 6L13 11" />
          </svg>
        </button>
      </nav>

      <div className="-mt-0.5 flex-1 pr-2 pl-[7px]">
        <Section title="Draw">
          <Row>{drawBig.map((t) => <BigTool key={t.label} {...t} />)}</Row>
          <Row>{drawSmall.map((t) => <SmallTool key={t.label} {...t} />)}</Row>
        </Section>
        <Section title="Hatch">
          <Row>
            {hatchBig.map((t) => <BigTool key={t.label} {...t} />)}
            <Quad tools={hatchSmall} />
          </Row>
        </Section>
        <Section title="Block">
          <Row>{blockBig.map((t) => <BigTool key={t.label} {...t} />)}</Row>
          <Row>{blockSmall.map((t) => <SmallTool key={t.label} {...t} />)}</Row>
        </Section>
        <Section title="Modify">
          <Row>
            <BigTool {...moveTool} />
            <Quad tools={modifyA} />
            <BigTool {...trimTool} />
            <Quad tools={modifyB} />
          </Row>
          <Row>{modifySmall.map((t) => <SmallTool key={t.label} {...t} />)}</Row>
        </Section>
        <Section title="Text">
          <Row>
            {textBig.map((t) => <BigTool key={t.label} {...t} />)}
            <Quad tools={textA} />
            <Quad tools={textB} />
          </Row>
        </Section>
        <Section title="Dimension">
          <Row>
            {dimBig.map((t) => <BigTool key={t.label} {...t} />)}
            <Quad tools={dimA} />
            <Quad tools={dimB} />
          </Row>
        </Section>
        <Section title="Leader">
          <Row>
            {leaderBig.map((t) => <BigTool key={t.label} {...t} />)}
            <Quad tools={leaderA} />
            <Quad tools={leaderB} />
          </Row>
        </Section>
        <Section title="Table">
          <Row>
            {tableBig.map((t) => <BigTool key={t.label} {...t} />)}
            <Quad tools={tableA} />
          </Row>
        </Section>
        <Section title="Parametric">
          <Row>
            <BigTool {...coincidentTool} />
            <Quad tools={paramA} />
            <BigTool {...lockTool} />
            <Quad tools={paramB} />
          </Row>
        </Section>
        <Section title="新建面板" />
      </div>

      <footer className="flex h-11 shrink-0 items-center gap-9 pl-[30px]">
        <button type="button" aria-label="Add panel">
          <svg viewBox="0 0 22 22" className="size-[22px]" stroke={LIGHT} strokeWidth="2">
            <path d="M11 0V22M0 11H22" />
          </svg>
        </button>
        <button type="button" aria-label="Panel list">
          <svg viewBox="0 0 26 22" className="h-[22px] w-[26px]" fill={LIGHT}>
            <path d="M5 1H26V3H5ZM5 7H26V9H5ZM0 12H18V16H0ZM5 19H26V21H5ZM20 15L23 12L26 15Z" />
          </svg>
        </button>
      </footer>
    </aside>
  );
}

/* ---------- drawing area ---------- */

const snap = (v: number) => 2 * Math.round(v / 2);
const ORIGIN_X = 902;
const ORIGIN_Y = 1090;

const columns = Array.from({ length: 56 }, (_, i) => i - 16).map((i) => ({ x: snap(901.8 + i * 54.62), major: i % 5 === 0 }));
const rows = Array.from({ length: 40 }, (_, i) => i - 20).map((i) => ({ y: snap(1090.6 + i * 54.63), major: i % 5 === 0 }));

function Drawing() {
  return (
    <svg className="absolute inset-0 size-full" shapeRendering="crispEdges">
      {columns.map(({ x, major }) => (
        <g key={x} fill={major ? "#272c39" : "#17181f"}>
          <rect x={x} y="0" width="1" height="100%" />
          <rect x={x - 1} y="0" width="3" height="100%" opacity="0.45" />
        </g>
      ))}
      {rows.map(({ y, major }) => (
        <g key={y} fill={major ? "#262a3c" : "#17181f"}>
          <rect x="0" y={y} width="100%" height="1" />
          <rect x="0" y={y - 1} width="100%" height="3" opacity="0.45" />
        </g>
      ))}
      {/* axes */}
      <g fill="#7d2120">
        <rect x={ORIGIN_X} y={ORIGIN_Y} width="100%" height="1" />
        <rect x={ORIGIN_X} y={ORIGIN_Y - 1} width="100%" height="3" opacity="0.3" />
      </g>
      <g fill="#2f6b1a">
        <rect x={ORIGIN_X} y="0" width="1" height={ORIGIN_Y} />
        <rect x={ORIGIN_X - 1} y="0" width="3" height={ORIGIN_Y} opacity="0.3" />
      </g>
      {/* drawn square */}
      <g fill="none" stroke="#ffffff">
        <rect x="510.5" y="412.5" width="656" height="656" strokeWidth="3" opacity="0.35" />
        <rect x="510.5" y="412.5" width="656" height="656" strokeWidth="1" />
      </g>
      {/* UCS icon */}
      <g fill="none" stroke="#e8eee6" strokeWidth="2">
        <path d="M903 992V1092H1003" />
        <rect x="895" y="1083" width="18" height="18" />
      </g>
      <g fill="#f4f4f4" fontFamily="Roboto, sans-serif" fontSize="36" fontWeight="200" textAnchor="middle">
        <text x="918" y="983">Y</text>
        <text x="1024" y="1089">X</text>
      </g>
      {/* cursor */}
      <g fill="none" stroke="#e6e6e6" strokeWidth="2">
        <path d="M343 220V288M343 300V369M268 294H337M349 294H417" />
        <rect x="337" y="288" width="12" height="12" />
      </g>
    </svg>
  );
}

function ViewCube() {
  return (
    <div className="absolute top-0 right-[14px] flex flex-col items-center gap-5">
      <svg viewBox="0 0 300 320" className="h-[320px] w-[300px]">
        <circle cx="150" cy="162" r="107" fill="none" stroke="#ffffff" strokeOpacity="0.18" strokeWidth="31" />
        <rect x="98" y="110" width="104" height="104" fill="#a3a3a3" />
        <rect x="118" y="130" width="64" height="64" fill="#999b9e" />
        <text x="150" y="171" fill="#474a52" fontSize="24" fontWeight="700" textAnchor="middle" fontFamily="Roboto, 'Open Sans', sans-serif">
          TOP
        </text>
        <g fill="#9c9c9c" fontWeight="700" textAnchor="middle" fontFamily="'Liberation Sans', Arial, sans-serif">
          <text x="150" y="68" fontSize="50">N</text>
          <text x="150" y="292" fontSize="50">S</text>
          <text x="263" y="179" fontSize="50">E</text>
          <text x="37" y="178" fontSize="44">W</text>
        </g>
      </svg>
      <button type="button" className="flex h-6 w-[100px] items-center justify-between rounded-lg bg-[#566060] px-2 font-[Inter,sans-serif] text-[22px] leading-6 text-black">
        WCS
        <svg viewBox="0 0 18 11" className="h-[11px] w-[18px]" fill="#8a9896" stroke="#000000" strokeWidth="1.5">
          <path d="M1 1H17L9 10Z" />
        </svg>
      </button>
    </div>
  );
}

const suggestions: { name: string; icon?: "offset" | "gear" | "surface" }[] = [
  { name: "OFFSET", icon: "offset" },
  { name: "OFFSETDIST", icon: "gear" },
  { name: "OFFSETEDGE" },
  { name: "OFFSETGAPTYPE", icon: "gear" },
  { name: "OFFSETSRF (SURFOFFSET)", icon: "surface" },
  { name: "PLOTOFFSET", icon: "gear" },
  { name: "SECTIONOFFSETINC", icon: "gear" },
  { name: "SURFOFFSETCONNECT", icon: "gear" },
];

function Suggestions() {
  return (
    <div className="relative mb-2 ml-[26px] w-[374px] bg-[#464e61] px-1.5 py-3">
      <ul className="flex flex-col gap-1">
        {suggestions.map(({ name, icon }, i) => (
          <li key={name}>
            <button
              type="button"
              className={clsx(
                "flex h-9 w-full items-center gap-1.5 pl-2.5 text-left font-[Inter,sans-serif] text-[22px] leading-7 font-medium text-[#f2f2f2]",
                i === 0 && "bg-[#232932]"
              )}
            >
              <span className="flex size-8 items-center justify-center">
                {icon === "offset" && <svg viewBox="0 0 96 96" className="size-8"><OffsetShape /></svg>}
                {icon === "gear" && <Gear className="size-[30px] text-[#d9d9d9]" />}
                {icon === "surface" && (
                  <svg viewBox="0 0 96 96" className="size-8">
                    <Fill d="M42 6L84 30Q50 50 42 88L0 66Q6 24 42 6Z" c="#edb88f" />
                    <Fill d="M50 82Q58 50 80 40L96 48Q76 60 68 90Z" />
                  </svg>
                )}
              </span>
              {name}
            </button>
          </li>
        ))}
      </ul>
      <span className="pointer-events-none absolute -top-[18px] -left-[30px] h-[89px] w-[447px] rounded-[10px] border-[6px] border-[#4fb0f8]" />
    </div>
  );
}

function CommandLine() {
  return (
    <div className="absolute inset-x-0 bottom-0 flex justify-center">
      <div className="w-[1000px]">
        <Suggestions />
        <div className="flex h-[50px] items-center bg-[#3b4452] pr-5 pb-0.5 pl-[18px]">
          <button type="button" aria-label="Recent commands">
            <svg viewBox="0 0 44 20" className="h-5 w-11">
              <path d="M1 1L10 6L1 11" fill="none" stroke="#a3a3a3" strokeWidth="2" />
              <path d="M14 17H27V19H14ZM32 5H43L37 12Z" fill="#a3a3a3" />
            </svg>
          </button>
          <input
            aria-label="Command"
            defaultValue="offset"
            className="ml-7 flex-1 bg-transparent font-['Open_Sans',sans-serif] text-[22px] leading-7 font-semibold text-[#f2f2f2] outline-none"
          />
          <button type="button" aria-label="Expand history">
            <svg viewBox="0 0 10 7" className="h-[7px] w-2.5" fill="#a3a3a3">
              <path d="M5 0L10 7H0Z" />
            </svg>
          </button>
          <button type="button" aria-label="Share" className="ml-[26px]">
            <svg viewBox="0 0 26 28" className="h-7 w-[26px]">
              <path d="M9 9H1V26H25V9H17M7 9V26" fill="none" stroke={LIGHT} strokeWidth="2" />
              <path d="M13 4V17" stroke={BLUE} strokeWidth="2" />
              <path d="M13 0L19 7H7Z" fill={BLUE} />
            </svg>
          </button>
        </div>
      </div>
    </div>
  );
}

/* ---------- status bar ---------- */

const statusTools = [
  { label: "Snap mode", icon: <path d="M4 5h5v5h-5zM14 5h5v5h-5zM24 5h5v5h-5zM4 14h5v5h-5zM14 14h5v5h-5zM24 14h5v5h-5zM4 24h5v5h-5zM14 24h5v5h-5zM24 24h5v5h-5z" fill={LIGHT} /> },
  { label: "Ortho mode", icon: <path d="M1 0V31H32M1 21H11V31" fill="none" stroke={LIGHT} strokeWidth="2" /> },
  { label: "Polar tracking", icon: <path d="M14 5A12 12 0 1 0 26 17M14 5Q24 6 26 17M32 17H14L28 2" fill="none" stroke={LIGHT} strokeWidth="2" /> },
  {
    label: "Dynamic input",
    icon: (
      <>
        <path d="M7 4V18M0 11H14" stroke={LIGHT} strokeWidth="2" />
        <path d="M12 20H32V28H12Z" fill={LIGHT} />
        <path d="M15 22V26" stroke={PANEL} />
      </>
    ),
  },
  { label: "Line weight", icon: <path d="M0 3H32V5H16V7H0ZM0 11H32V13H16V17H0ZM0 21H32V23H16V29H0Z" fill={LIGHT} /> },
];

function StatusBar() {
  return (
    <footer className="flex h-12 shrink-0 border-y-2 border-l-2 border-[#242a35] bg-[#3b4351] font-['Open_Sans',sans-serif] text-[22px] leading-7 text-[#a8aab0]">
      <button type="button" className="w-[118px] bg-[#4d586d] pr-1 pb-1 font-semibold text-[#f2f2f2]">Model</button>
      <button type="button" aria-label="New layout" className="flex w-12 items-center justify-center border-x-2 border-[#242a35]">
        <svg viewBox="0 0 22 22" className="size-[22px]" stroke={LIGHT} strokeWidth="2">
          <path d="M11 0V22M0 11H22" />
        </svg>
      </button>
      <button type="button" className="w-[118px] border-r-2 border-[#242a35] pr-0.5 pb-1.5">Layout1</button>
      <button type="button" className="w-[118px] border-r-2 border-[#242a35] pr-0.5 pb-1.5">Layout2</button>
      <div className="-mr-0.5 ml-auto flex items-center border-l-2 border-[#242a35]">
        <output className="mr-[7px] ml-[18px] min-w-[280px] pb-0.5 text-center font-[Inter,sans-serif] text-[#b8b8b8]">-25.5784, 36.4397, 0.0000</output>
        <button type="button" aria-label="Grid display" aria-pressed="true" className="mx-0.5 flex size-10 items-center justify-center bg-[#6688bb]">
          <svg viewBox="0 0 30 30" className="size-[30px]" stroke="#ffffff" strokeWidth="2">
            <path d="M7 0V30M15 0V30M23 0V30M0 7H30M0 15H30M0 23H30" />
          </svg>
        </button>
        {statusTools.map(({ label, icon }) => (
          <button key={label} type="button" aria-label={label} className="flex size-11 items-center justify-center">
            <svg viewBox="0 0 32 32" className="size-8">{icon}</svg>
          </button>
        ))}
      </div>
    </footer>
  );
}

/* ---------- document tabs, cut off by the top edge ---------- */

function TabStrip() {
  return (
    <header className="flex h-4 shrink-0 border-b-2 border-[#242a35] bg-[#3b4452]">
      <button type="button" aria-label="Home" className="w-[50px] border-x-2 border-[#242a35]">
        <svg viewBox="0 0 46 14" className="h-[14px] w-[46px]" fill={LIGHT}>
          <path d="M10 0H22V6H10ZM24 0H36V6H24Z" />
        </svg>
      </button>
      <button type="button" aria-label="New tab" className="w-[46px] border-r-2 border-[#242a35]">
        <svg viewBox="0 0 44 14" className="h-[14px] w-11" fill={LIGHT}>
          <path d="M21 0H23V3H21Z" />
        </svg>
      </button>
      <div className="w-[260px] border-r-2 border-[#242a35]" />
      <button type="button" aria-label="Current drawing" className="w-[258px] border-r-2 border-[#242a35] bg-[#4f5a6f]">
        <svg viewBox="0 0 256 14" className="h-[14px] w-[256px]" fill="#f2f2f2">
          <path d="M82 0H90Q86 4 82 0Z" />
        </svg>
      </button>
    </header>
  );
}

export default function App() {
  return (
    <div className="flex h-screen flex-col overflow-hidden bg-linear-to-r from-[#b4b4b4] via-[#8d9196] to-[#a2a09e] pb-[18px] font-['Liberation_Sans','Noto_Sans_CJK_SC',sans-serif]">
      <TabStrip />
      <div className="flex min-h-0 flex-1">
        <Palette />
        <div className="flex min-w-0 flex-1 flex-col">
          <div className="flex min-h-0 flex-1">
            <main className="relative flex-1 overflow-hidden bg-black">
              <Drawing />
              <div className="absolute top-[7px] left-[28px] flex items-center gap-3 font-['Open_Sans',sans-serif] text-[23px] leading-8 font-semibold text-[#989898]">
                <button type="button" aria-label="Viewport controls" className="mr-3">
                  <svg viewBox="0 0 16 16" className="size-4" stroke="#989898" strokeWidth="2">
                    <path d="M8 1V15M1 8H15" />
                  </svg>
                </button>
                <span className="h-7 w-0.5 bg-[#989898]" />
                <button type="button" className="pr-1">Top</button>
                <span className="h-7 w-0.5 bg-[#989898]" />
                <button type="button">2D Wireframe</button>
              </div>
              <ViewCube />
              <CommandLine />
            </main>
            <div className="w-2.5 bg-[#3b4452]">
              <div className="h-[346px] border-b-2 border-[#242a35]" />
            </div>
          </div>
          <StatusBar />
        </div>
      </div>
    </div>
  );
}
